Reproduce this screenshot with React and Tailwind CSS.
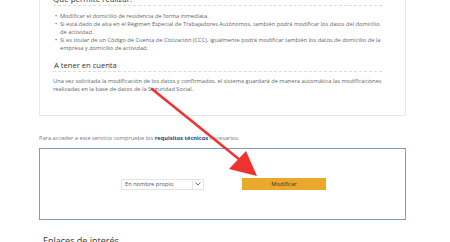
import React from 'react'

const font = { fontFamily: '"Open Sans", "Liberation Sans", sans-serif' }

function Arrow() {
  return (
    <svg className="absolute left-0 top-0 pointer-events-none" width="450" height="242" viewBox="0 0 450 242">
      <line x1="152" y1="89" x2="240" y2="160" stroke="#ef3333" strokeWidth="2.6" strokeLinecap="round" />
      <polygon points="257,176 229,169 246,151" fill="#ef3333" />
    </svg>
  )
}

export default function App() {
  return (
    <div className="relative w-[450px] h-[242px] overflow-hidden bg-white" style={font}>
      <div className="ml-[39px] w-[367px]">
        <div className="border border-[#e8e8e8] border-t-0 px-[13px] pb-[22px] -mt-[6px]">
          <div className="border-b border-dashed border-[#dcdcdc] pb-[1px] mr-[10px]">
            <h3 className="text-[8px] leading-[10px] text-[#333]">Qué permite realizar:</h3>
          </div>
          <ul className="mt-[6px] text-[5.7px] leading-[8px] text-[#666] whitespace-nowrap">
            <li className="flex"><span className="w-[7px] pl-[2px]">•</span><span>Modificar el domicilio de residencia de forma inmediata.</span></li>
            <li className="flex"><span className="w-[7px] pl-[2px]">•</span><span>Si está dado de alta en el Régimen Especial de Trabajadores Autónomos, también podrá modificar los datos del domicilio<br />de actividad.</span></li>
            <li className="flex"><span className="w-[7px] pl-[2px]">•</span><span>Si es titular de un Código de Cuenta de Cotización (CCC), igualmente podrá modificar también los datos de domicilio de la<br />empresa y domicilio de actividad.</span></li>
          </ul>
          <div className="mt-[8px] border-b border-dashed border-[#dcdcdc] pb-[1px] mr-[10px]">
            <h3 className="text-[7.6px] leading-[10px] text-[#333] pl-[1px]">A tener en cuenta</h3>
          </div>
          <p className="mt-[5px] text-[5.7px] leading-[8px] text-[#666] whitespace-nowrap">
            Una vez solicitada la modificación de los datos y confirmados, el sistema guardará de manera automática las modificaciones<br />
            realizadas en la base de datos de la Seguridad Social.
          </p>
        </div>

        <p className="mt-[18px] text-[5.7px] leading-[8px] text-[#777] whitespace-nowrap">
          Para acceder a este servicio compruebe los <span className="font-bold text-[#2b4a7a]">requisitos técnicos</span> necesarios.
        </p>

        <div className="mt-[6px] h-[72px] border-[1.5px] border-[#7f9dc2] flex items-center pl-[81px] gap-[38px]">
          <div className="flex items-center h-[11px] w-[83px] border border-[#e4e4e4] text-[5.7px] text-[#555]">
            <span className="flex-1 pl-[3px]">En nombre propio</span>
            <span className="w-[11px] h-full border-l border-[#e4e4e4] flex items-center justify-center">
              <svg width="6" height="4" viewBox="0 0 6 4"><path d="M0.5 0.5 L3 3 L5.5 0.5" fill="none" stroke="#4a6a9a" strokeWidth="0.9" /></svg>
            </span>
          </div>
          <button className="h-[12px] w-[84px] bg-[#eaa92c] text-[5.8px] text-[#333]">Modificar</button>
        </div>

        <h3 className="mt-[16px] ml-[4px] text-[9px] leading-[10px] text-[#333]">Enlaces de interés</h3>
      </div>
      <Arrow />
    </div>
  )
}
